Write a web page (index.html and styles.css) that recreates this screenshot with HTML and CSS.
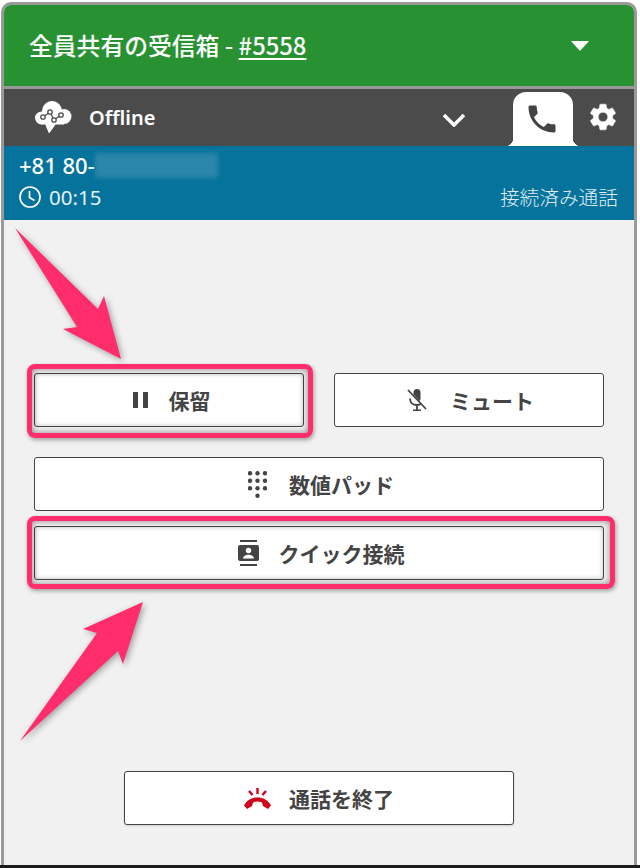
FILE: index.html
```html
<!DOCTYPE html>
<html lang="ja">
<head>
<meta charset="utf-8">
<title>CCP</title>
<link rel="stylesheet" href="styles.css">
</head>
<body>
<div class="window">
  <header class="queue">
    <div class="queue-title">全員共有の受信箱 - <a class="case-link">#5558</a></div>
    <svg class="queue-caret" viewBox="0 0 18 10"><path d="M0 0h18L9 10z"/></svg>
  </header>
  <nav class="status-bar">
    <svg class="logo" viewBox="34 102 38 34">
      <g class="logo-cloud">
        <circle cx="52" cy="113" r="10"/><circle cx="41.500" cy="120" r="6.500"/><circle cx="64" cy="118.500" r="7.500"/>
        <path d="M41 115h23v11.500H41zM45 126h11l-7 9.500z"/>
      </g>
      <path class="logo-line" d="M43 119l7-5 4 8 7-5"/>
      <g class="logo-node"><circle cx="43" cy="119" r="2.200"/><circle cx="50" cy="114" r="2.200"/><circle cx="54" cy="122" r="2.200"/><circle cx="61" cy="117" r="2.200"/></g>
    </svg>
    <span class="status-text">Offline</span>
    <svg class="chevron" viewBox="0 0 24 14"><path d="M2 2l10 10L22 2"/></svg>
    <div class="tab">
      <svg class="tab-phone" viewBox="0 0 24 24"><path d="M6.620 10.790c1.440 2.830 3.760 5.140 6.590 6.590l2.200-2.200c.27-.27.67-.36 1.020-.24 1.120.37 2.330.57 3.570.57.550 0 1 .45 1 1V20c0 .55-.45 1-1 1-9.390 0-17-7.610-17-17 0-.55.45-1 1-1h3.500c.55 0 1 .45 1 1 0 1.250.2 2.450.57 3.570.11.350.03.740-.25 1.020l-2.200 2.200z"/></svg>
    </div>
    <svg class="gear" viewBox="0 0 24 24"><path d="M19.140 12.940c.04-.3.060-.61.060-.94s-.02-.64-.07-.94l2.030-1.580a.5.500 0 0 0 .12-.61l-1.920-3.320a.5.500 0 0 0-.59-.22l-2.390.96c-.5-.38-1.030-.7-1.620-.94L14.400 2.810a.48.480 0 0 0-.48-.41h-3.840a.48.480 0 0 0-.47.410l-.36 2.540c-.59.24-1.130.57-1.620.94l-2.390-.96a.48.480 0 0 0-.59.22L2.740 8.870a.48.480 0 0 0 .12.61l2.030 1.580c-.05.3-.09.63-.09.94s.02.640.07.940l-2.030 1.580a.5.500 0 0 0-.12.610l1.920 3.320c.12.22.37.29.59.22l2.390-.96c.5.380 1.030.7 1.620.94l.36 2.540c.05.240.24.410.48.410h3.840c.24 0 .44-.17.47-.41l.36-2.540c.59-.24 1.130-.56 1.620-.94l2.390.96c.22.080.47 0 .59-.22l1.920-3.320a.48.480 0 0 0-.12-.61zM12 15.600a3.600 3.600 0 1 1 0-7.200 3.600 3.600 0 0 1 0 7.200z"/></svg>
  </nav>
  <section class="call-info">
    <div class="call-number">+81 80-<span class="blurred"></span></div>
    <div class="call-meta">
      <svg class="clock" viewBox="0 0 22 22"><circle cx="11" cy="11" r="10"/><path d="M10.500 5v6.500l5 3"/></svg>
      <span class="call-time">00:15</span>
      <span class="call-state">接続済み通話</span>
    </div>
  </section>
  <main class="controls">
    <div class="row-pair">
      <button class="btn btn-marked gap-hold">
        <svg class="ico-pause" viewBox="0 0 15 16"><path d="M0 0h5v16H0zM10 0h5v16h-5z"/></svg>保留
        <span class="mark mark-hold"></span>
      </button>
      <button class="btn gap-mute">
        <svg class="ico-mute" viewBox="0 0 20 22">
          <path class="solid" d="M6.500 3.500a3.500 3.500 0 0 1 7 0v6a3.500 3.500 0 0 1-1 2.500L6.500 5.500z"/>
          <path class="line" d="M3 9.500c0 4 3 6.500 7 6.500 2 0 3.500-.6 4.700-1.500M10 16v5.500M6 21.500h8M1 1l18 19"/>
        </svg>ミュート
      </button>
    </div>
    <button class="btn btn-pad gap-pad">
      <svg class="ico-pad" viewBox="0 0 19 27"><circle cx="2" cy="2.300" r="2.200"/><circle cx="9.500" cy="2.300" r="2.200"/><circle cx="17" cy="2.300" r="2.200"/><circle cx="2" cy="9.800" r="2.200"/><circle cx="9.500" cy="9.800" r="2.200"/><circle cx="17" cy="9.800" r="2.200"/><circle cx="2" cy="17.300" r="2.200"/><circle cx="9.500" cy="17.300" r="2.200"/><circle cx="17" cy="17.300" r="2.200"/><circle cx="9.500" cy="24.800" r="2.200"/></svg>数値パッド
    </button>
    <button class="btn btn-quick btn-marked gap-quick">
      <svg class="ico-contact" viewBox="0 0 21 26">
        <path d="M2 0h17v2H2zM2 24h17v2H2z"/>
        <rect y="5" width="21" height="16" rx="2"/>
        <circle class="hole" cx="10.500" cy="10.500" r="2.700"/>
        <path class="hole" d="M5 18.500c0-2.500 3-3.800 5.500-3.800s5.500 1.300 5.500 3.800z"/>
      </svg>クイック接続
      <span class="mark mark-quick"></span>
    </button>
    <button class="btn btn-end gap-end">
      <svg class="ico-end" viewBox="0 0 27 21">
        <path class="fill" d="M0 17.500c3-5.500 8-8 13.500-8s10.500 2.500 13.500 8l-3 3.500-5-3-1-3.500c-3-1.500-6-1.500-9 0l-1 3.500-5 3z"/>
        <path class="ray" d="M13.500 0v6M5 3l3.500 4M22 3l-3.500 4"/>
      </svg>通話を終了
    </button>
  </main>
</div>
<div class="taskbar"></div>
<svg class="arrows" viewBox="0 0 640 868">
  <polygon points="15,228 98,309 104,296 121,359 63,329 77,327"/>
  <polygon points="20,741 97,633 83,629 143,602 123,664 118,651"/>
</svg>
</body>
</html>
```

FILE: styles.css
```css
* { box-sizing: border-box; }
html, body { margin: 0; padding: 0; }
body {
  position: relative;
  width: 640px;
  height: 868px;
  overflow: hidden;
  background: #fff;
  display: flex;
  flex-direction: column;
  font-family: "Noto Sans CJK JP", "Noto Sans", sans-serif;
}
.window {
  margin: 2px 3px 0 1px;
  height: 863px;
  border: 3px solid #999;
  border-bottom: 0;
  border-radius: 10px 10px 0 0;
  background: #f1f1f1;
  overflow: hidden;
  display: flex;
  flex-direction: column;
}
.taskbar { height: 3px; background: #1b1b1b; }

.queue {
  height: 81px;
  flex: none;
  background: #289233;
  color: #fff;
  display: flex;
  align-items: center;
  justify-content: space-between;
  padding: 0 45px 2px 25px;
}
.queue-title { font-size: 23.800px; font-weight: 500; line-height: 32px; }
.case-link { text-decoration: underline; text-underline-offset: 3px; }
.queue-caret { width: 18px; height: 10px; fill: #fff; margin-top: 2px; }

.status-bar {
  height: 60px;
  flex: none;
  border-top: 3px solid #999;
  background: #4b4b4b;
  display: flex;
  align-items: stretch;
  color: #fff;
}
.logo { width: 38px; height: 34px; margin: 11px 0 0 30px; flex: none; }
.logo-cloud { fill: #fff; }
.logo-line { fill: none; stroke: #4b4b4b; stroke-width: 1.200; }
.logo-node circle { fill: #fff; stroke: #4b4b4b; stroke-width: 1.300; }
.status-text {
  margin-left: 17px;
  font-family: "Noto Sans", sans-serif;
  font-size: 20px;
  font-weight: 600;
  line-height: 57px;
}
.chevron {
  width: 24px;
  height: 14px;
  margin: 24px 0 0 287px;
  fill: none;
  stroke: #fff;
  stroke-width: 3.500;
  flex: none;
}
.tab {
  position: relative;
  width: 60px;
  margin: 3px 0 0 47px;
  background: #fff;
  border-radius: 13px 13px 0 0;
  flex: none;
}
.tab::before, .tab::after {
  content: "";
  position: absolute;
  bottom: 0;
  width: 8px;
  height: 8px;
}
.tab::before { left: -8px; background: radial-gradient(circle at 0 0, transparent 8px, #fff 8.500px); }
.tab::after { right: -8px; background: radial-gradient(circle at 100% 0, transparent 8px, #fff 8.500px); }
.tab-phone { display: block; width: 36px; height: 36px; margin: 9px 0 0 11px; fill: #444; }
.gear { width: 32px; height: 32px; margin: 12px 0 0 14px; fill: #fff; stroke: #fff; stroke-width: .4; flex: none; }

.call-info {
  height: 74px;
  flex: none;
  background: #05739b;
  color: #fff;
  padding: 0 16px 0 15px;
}
.call-number {
  display: flex;
  align-items: center;
  height: 37px;
  padding-top: 1px;
  font-family: "Noto Sans", sans-serif;
  font-size: 22px;
  font-weight: 500;
}
.blurred {
  display: block;
  width: 123px;
  height: 25px;
  background: #2a86aa;
  filter: blur(2px);
}
.call-meta { display: flex; align-items: center; height: 27px; margin-top: 0; }
.clock { width: 22px; height: 22px; fill: none; stroke: #fff; stroke-width: 1.700; flex: none; }
.call-time {
  margin-left: 8px;
  font-family: "Noto Sans", sans-serif;
  font-size: 20.500px;
  color: #e6f1f5;
}
.call-state { margin-left: auto; font-size: 19.700px; font-weight: 300; color: #e0eef3; }

.controls { flex: 1; padding: 153px 30px 0; display: flex; flex-direction: column; }
.row-pair { display: grid; grid-template-columns: 270px 270px; column-gap: 30px; }
.btn {
  position: relative;
  height: 54px;
  padding: 0;
  border: 1px solid #444;
  border-radius: 3px;
  background: #fff;
  color: #444;
  font-family: "Noto Sans CJK JP", sans-serif;
  font-size: 21px;
  font-weight: 700;
  display: flex;
  align-items: center;
  justify-content: center;
  flex: none;
}
.btn-marked { box-shadow: inset 0 0 5px rgba(0,0,0,.25); }
.btn-pad { margin-top: 30px; }
.btn-quick { margin-top: 15px; }
.btn-end { width: 390px; margin: 191px 0 0 90px; box-shadow: 0 1px 2px rgba(0,0,0,.15); }

.gap-hold { gap: 21px; padding-left: 5px; }
.gap-mute { gap: 23px; padding-left: 3px; }
.gap-pad { gap: 22px; padding-left: 4px; }
.gap-quick { gap: 20px; padding-left: 4px; }
.gap-end { gap: 18px; }

.ico-pause { width: 15px; height: 16px; fill: #444; flex: none; }
.ico-mute { width: 20px; height: 22px; flex: none; }
.ico-mute .solid { fill: #444; }
.ico-mute .line { fill: none; stroke: #444; stroke-width: 1.800; }
.ico-pad { width: 19px; height: 27px; fill: #444; flex: none; }
.ico-contact { width: 21px; height: 26px; fill: #444; flex: none; }
.ico-contact .hole { fill: #fff; }
.ico-end { width: 27px; height: 21px; flex: none; }
.ico-end .fill { fill: #d0021b; }
.ico-end .ray { fill: none; stroke: #d0021b; stroke-width: 2.400; }

.mark {
  position: absolute;
  border: 5px solid #ff2d6b;
  border-radius: 8px;
  box-shadow: 1px 2px 4px rgba(0,0,0,.35), inset 0 0 6px rgba(0,0,0,.45);
  pointer-events: none;
}
.mark-hold { left: -8px; right: -10px; top: -10px; bottom: -12px; }
.mark-quick { left: -8px; right: -12px; top: -11px; bottom: -10px; }

.arrows {
  position: absolute;
  left: 0;
  top: 0;
  width: 640px;
  height: 868px;
  fill: #ff2d6b;
  filter: drop-shadow(2px 2px 3px rgba(0,0,0,.35));
  pointer-events: none;
}
```
